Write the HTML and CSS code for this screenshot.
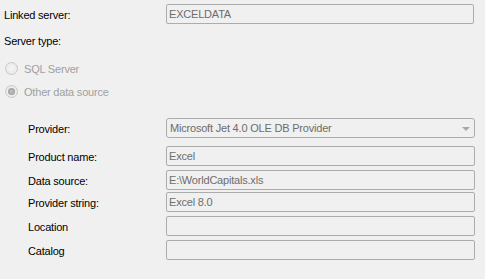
FILE: index.html
```html
<!DOCTYPE html>
<html lang="en">

<head>
    <meta charset="UTF-8">
    <title>Linked Server Properties</title>
    <link rel="stylesheet" href="styles.css">
</head>

<body>
    <div class="page">
        <div class="row first">
            <div class="label">Linked server:</div>
            <div class="field">EXCELDATA</div>
        </div>

        <div class="heading">Server type:</div>

        <div class="radio-row">
            <span class="radio"></span>
            <span class="radio-text">SQL Server</span>
        </div>
        <div class="radio-row">
            <span class="radio checked"></span>
            <span class="radio-text">Other data source</span>
        </div>

        <div class="group">
            <div class="row provider">
                <div class="label">Provider:</div>
                <div class="field combo">
                    Microsoft Jet 4.0 OLE DB Provider
                    <span class="arrow"></span>
                </div>
            </div>
            <div class="row product">
                <div class="label">Product name:</div>
                <div class="field">Excel</div>
            </div>
            <div class="row">
                <div class="label">Data source:</div>
                <div class="field">E:\WorldCapitals.xls</div>
            </div>
            <div class="row tight">
                <div class="label">Provider string:</div>
                <div class="field">Excel 8.0</div>
            </div>
            <div class="row">
                <div class="label">Location</div>
                <div class="field"></div>
            </div>
            <div class="row">
                <div class="label">Catalog</div>
                <div class="field"></div>
            </div>
        </div>
    </div>
</body>

</html>
```

FILE: styles.css
```css
body {
    margin: 0;
    background-color: #f0f0f0;
    font-family: 'Liberation Sans', Arial, sans-serif;
    font-size: 11px;
    letter-spacing: -0.2px;
    color: #000;
}

.page {
    padding: 4px 0 0 4px;
}

.row {
    display: flex;
    align-items: center;
    height: 20px;
    margin-top: 4px;
}

.row.first {
    margin-top: 0;
}

.label {
    width: 162px;
    padding-top: 2px;
}

.field {
    box-sizing: border-box;
    width: 308px;
    height: 20px;
    line-height: 18px;
    padding-left: 2px;
    border: 1px solid #acacac;
    border-radius: 2px;
    background-color: #f0f0f0;
    color: #6d6d6d;
    white-space: nowrap;
}

.heading {
    height: 22px;
    line-height: 22px;
    margin-top: 6px;
}

.radio-row {
    display: flex;
    align-items: center;
    height: 23px;
    padding-left: 1px;
}

.heading + .radio-row {
    margin-top: 5px;
}

.radio {
    box-sizing: border-box;
    width: 13px;
    height: 13px;
    border: 1px solid #c9c9c9;
    border-radius: 50%;
    background: radial-gradient(circle, #f4f4f4 0%, #e6e6e6 100%);
    margin-right: 6px;
    position: relative;
}

.radio.checked::after {
    content: '';
    position: absolute;
    left: 2px;
    top: 2px;
    width: 7px;
    height: 7px;
    border-radius: 50%;
    background: radial-gradient(circle, #c4c4c4 0%, #8f8f8f 100%);
}

.radio-text {
    color: #a0a0a0;
    padding-top: 1px;
}

.group {
    margin-top: 15px;
    padding-left: 24px;
}

.group .label {
    width: 138px;
}

.group .field {
    width: 309px;
}

.row.provider {
    margin-top: 0;
}

.row.product {
    margin-top: 8px;
}

.row.tight {
    margin-top: 2px;
}

.combo {
    position: relative;
    border-radius: 3px;
    padding-left: 3px;
}

.arrow {
    position: absolute;
    right: 4px;
    top: 8px;
    width: 0;
    height: 0;
    border-left: 4px solid transparent;
    border-right: 4px solid transparent;
    border-top: 4px solid #a8a8a8;
}
```
